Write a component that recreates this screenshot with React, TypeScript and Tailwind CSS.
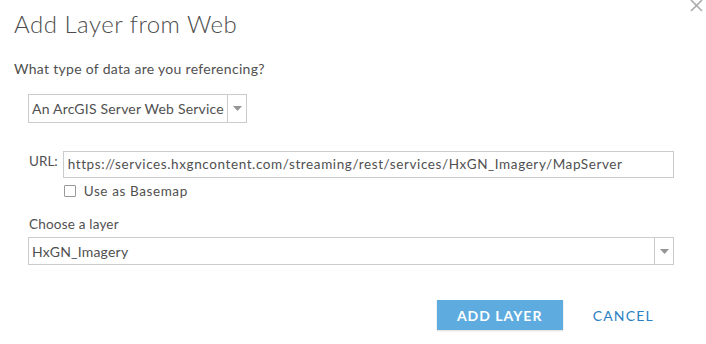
import React from 'react';

const Caret: React.FC = () => (
  <svg width="9" height="5" viewBox="0 0 9 5" className="fill-[#959595]">
    <path d="M0 0h9L4.5 5z" />
  </svg>
);

const SelectBox: React.FC<{ value: string; className?: string }> = ({ value, className }) => (
  <div className={`flex items-stretch border border-[#cbcbcb] bg-white ${className ?? ''}`}>
    <div className="flex flex-1 items-center truncate pl-[3px] text-[14px] tracking-[0.2px] text-[#505050]">{value}</div>
    <div className="flex w-[19px] items-center justify-center border-l border-[#cbcbcb]">
      <Caret />
    </div>
  </div>
);

const App: React.FC = () => {
  return (
    <div className="relative h-[344px] w-[706px] overflow-hidden bg-white font-['Lato',sans-serif] text-[#505050]">
      <button className="absolute right-[3px] top-[-1px] text-[#aaaaaa]">
        <svg width="14" height="14" viewBox="0 0 14 14" stroke="currentColor" strokeWidth="1.6">
          <path d="M2 1l11 11M13 1L2 12" />
        </svg>
      </button>

      <div className="pl-[14px] pt-[7px]">
        <div className="text-[24px] font-light leading-[34px] tracking-[0.5px] text-[#4c4c4c]">Add Layer from Web</div>
        <div className="mt-[19px] text-[14px] leading-[18px] tracking-[0.3px]">What type of data are you referencing?</div>
      </div>

      <div className="pl-[28px] pt-[16px]">
        <SelectBox value="An ArcGIS Server Web Service" className="h-[29px] w-[219px]" />
      </div>

      <div className="flex items-start pl-[29px] pt-[28px]">
        <div className="pt-[1px] text-[13.5px] leading-[18px]">URL:</div>
        <div className="ml-[5px] flex flex-col">
          <div className="flex h-[27px] w-[611px] items-center border border-[#cbcbcb] pl-[4px] text-[13.5px] tracking-[0.6px]">
            https://services.hxgncontent.com/streaming/rest/services/HxGN_Imagery/MapServer
          </div>
          <label className="mt-[6px] flex items-center gap-[8px] pl-[1px] text-[13.5px] leading-[14px] tracking-[0.6px]">
            <span className="h-[12px] w-[12px] rounded-[1px] border border-[#9a9a9a] bg-white" />
            Use as Basemap
          </label>
        </div>
      </div>

      <div className="pl-[29px] pt-[17px] text-[13.5px] leading-[18px] tracking-[0.2px]">Choose a layer</div>
      <div className="pl-[28px] pr-[32px] pt-[4px]">
        <SelectBox value="HxGN_Imagery" className="h-[28px]" />
      </div>

      <div className="flex items-center justify-end pr-[52px] pt-[35px]">
        <button className="h-[30px] w-[126px] bg-[#5dabdf] text-[14px] font-bold tracking-[1px] text-white shadow-[0_1px_2px_rgba(0,0,0,0.15)]">
          ADD LAYER
        </button>
        <button className="ml-[30px] text-[14px] tracking-[1.2px] text-[#2b7fc3]">CANCEL</button>
      </div>
    </div>
  );
};

export default App;
